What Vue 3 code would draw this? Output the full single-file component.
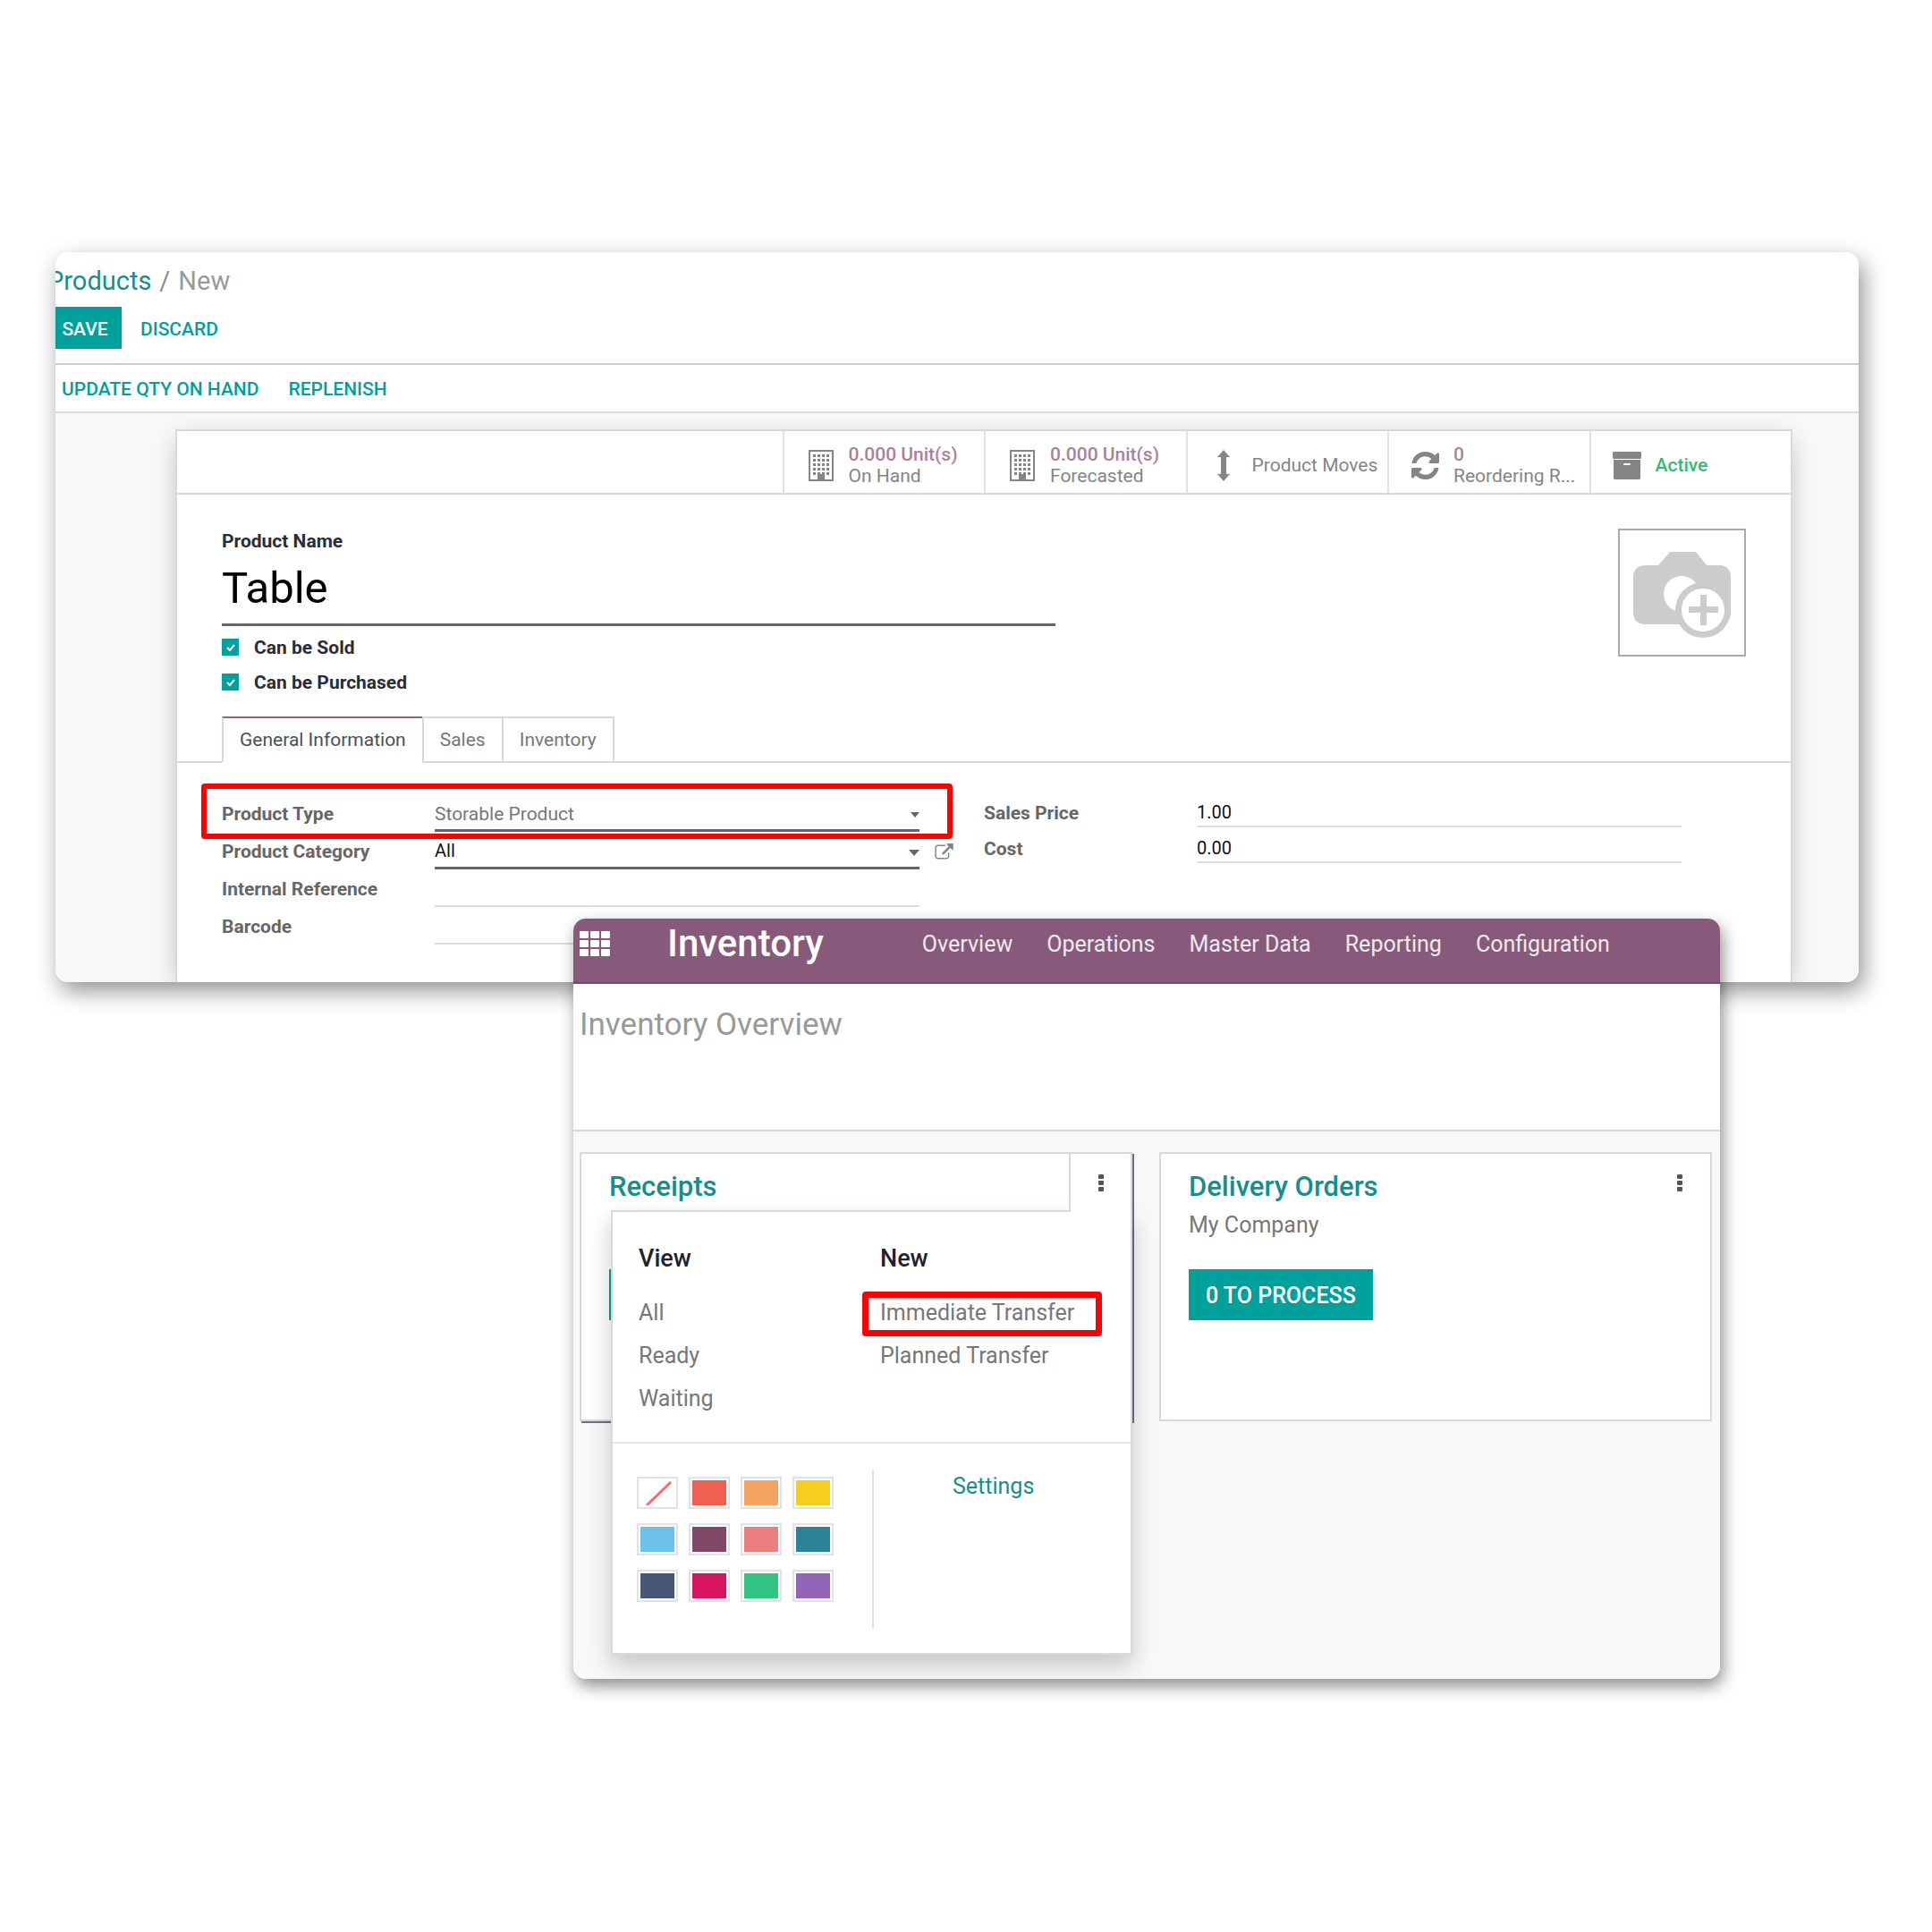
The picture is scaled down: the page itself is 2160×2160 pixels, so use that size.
<script setup>
import { ref } from 'vue'

const name = ref('Table')
const canBeSold = ref(true)
const canBePurchased = ref(true)
const productType = ref('Storable Product')
const category = ref('All')
const internalReference = ref('')
const barcode = ref('')
const salesPrice = ref('1.00')
const cost = ref('0.00')

const menuItems = ['Overview', 'Operations', 'Master Data', 'Reporting', 'Configuration']
const tabs = ['General Information', 'Sales', 'Inventory']
const activeTab = ref(tabs[0])
const viewLinks = ['All', 'Ready', 'Waiting']
const swatches = [
  '', '#f06050', '#f4a460', '#f7cd1f',
  '#6cc1ed', '#814968', '#eb7e7f', '#2c8397',
  '#475577', '#d6145f', '#30c381', '#9365b8',
]
const windowRows = [0, 1, 2, 3, 4]
const windowCols = [0, 1, 2, 3]
</script>

<template>
  <main class="page">
    <section class="panel product">
      <header class="product-head">
        <nav class="breadcrumb">
          <a href="#">Products</a><span class="slash">/</span><span class="current">New</span>
        </nav>
        <div class="head-buttons">
          <button class="btn primary save">SAVE</button>
          <button class="btn flat">DISCARD</button>
        </div>
      </header>
      <div class="actions">
        <button class="btn flat">UPDATE QTY ON HAND</button>
        <button class="btn flat">REPLENISH</button>
      </div>

      <div class="form-bg">
        <div class="sheet">
          <div class="stats">
            <button v-for="label in ['On Hand', 'Forecasted']" :key="label" class="stat">
              <svg class="stat-icon" viewBox="0 0 28 35" width="28" height="35" fill="#858585">
                <path fill-rule="evenodd" d="M0 0h28v35H0zM2 2v31h8v-6h8v6h8V2z" />
                <template v-for="r in windowRows" :key="r">
                  <rect v-for="c in windowCols" :key="c" :x="5 + c * 5" :y="5 + r * 5" width="3" height="3" />
                </template>
              </svg>
              <span class="stat-text"><b>0.000 Unit(s)</b><span>{{ label }}</span></span>
            </button>
            <button class="stat moves">
              <svg class="stat-icon" viewBox="0 0 14 35" width="14" height="35" fill="#858585">
                <path d="M7 0l7 8h-4v19h4l-7 8-7-8h4V8H0z" />
              </svg>
              <span class="stat-text">Product Moves</span>
            </button>
            <button class="stat">
              <svg class="stat-icon" viewBox="128 128 1536 1536" width="31" height="31" fill="#858585">
                <path d="M1639 1056q0 5-1 7-64 268-268 434.500t-478 166.500q-146 0-282.500-55t-243.500-157l-129 129q-19 19-45 19t-45-19-19-45v-448q0-26 19-45t45-19h448q26 0 45 19t19 45-19 45l-137 137q71 66 161 102t187 36q134 0 250-65t186-179q11-17 53-117 8-23 30-23h192q13 0 22.500 9.500t9.500 22.500zm25-800v448q0 26-19 45t-45 19h-448q-26 0-45-19t-19-45 19-45l138-138q-148-137-349-137-134 0-250 65t-186 179q-11 17-53 117-8 23-30 23h-199q-13 0-22.500-9.500t-9.500-22.500v-7q65-268 270-434.500t480-166.500q146 0 284 55.500t245 156.500l130-129q19-19 45-19t45 19 19 45z" />
              </svg>
              <span class="stat-text"><b>0</b><span>Reordering R...</span></span>
            </button>
            <button class="stat active">
              <svg class="stat-icon" viewBox="0 0 32 31" width="32" height="31" fill="#858585">
                <path d="M1 0h30l1 1v6l-1 1H1L0 7V1z" />
                <path fill-rule="evenodd" d="M1 9h30v21l-1 1H2l-1-1zM13 13q-1 0-1 1t1 1h6q1 0 1-1t-1-1z" />
              </svg>
              <span class="stat-text">Active</span>
            </button>
          </div>

          <div class="title-block">
            <div class="title-left">
              <label class="name-label" for="name">Product Name</label>
              <input id="name" v-model="name" class="name-input" type="text">
              <div class="options">
                <label class="check"><input v-model="canBeSold" type="checkbox">Can be Sold</label>
                <label class="check"><input v-model="canBePurchased" type="checkbox">Can be Purchased</label>
              </div>
            </div>
            <button class="photo" aria-label="Add image">
              <svg viewBox="0 0 110 106" width="110" height="106">
                <path fill="#ccc" d="M14 15h14L41 0h29l12 15h14q13 0 13 14v38q0 14-13 14H14Q0 81 0 67V29Q0 15 14 15z" />
                <circle cx="54" cy="47" r="20" fill="#fff" />
                <circle cx="78" cy="65" r="31" fill="#ccc" />
                <circle cx="78" cy="65" r="24" fill="#fff" />
                <path fill="#ccc" d="M75 48h7v13h13v7H82v14h-7V68H62v-7h13z" />
              </svg>
            </button>
          </div>

          <div class="tabs" role="tablist">
            <button
              v-for="tab in tabs" :key="tab" role="tab"
              :class="['tab', { selected: tab === activeTab }]" @click="activeTab = tab"
            >{{ tab }}</button>
          </div>

          <div class="fields">
            <div class="group left">
              <div class="field strong marked">
                <label for="type">Product Type</label>
                <div class="control">
                  <select id="type" v-model="productType"><option>Storable Product</option></select>
                  <svg class="caret" viewBox="0 0 10 6" width="10" height="6"><path fill="#666" d="M0 0h10L5 6z" /></svg>
                </div>
              </div>
              <div class="field strong">
                <label for="category">Product Category</label>
                <div class="control">
                  <input id="category" v-model="category" type="text">
                  <svg class="caret" viewBox="0 0 12 7" width="12" height="7"><path fill="#666" d="M0 0h12L6 7z" /></svg>
                </div>
                <button class="open" aria-label="Open category">
                  <svg viewBox="0 0 1792 1664" width="21" height="19"><path fill="#7c8590" d="M1408 928v320q0 119-84.500 203.500t-203.500 84.500h-832q-119 0-203.500-84.500t-84.500-203.500v-832q0-119 84.500-203.500t203.500-84.500h704q14 0 23 9t9 23v64q0 14-9 23t-23 9h-704q-66 0-113 47t-47 113v832q0 66 47 113t113 47h832q66 0 113-47t47-113v-320q0-14 9-23t23-9h64q14 0 23 9t9 23zm384-864v512q0 26-19 45t-45 19-45-19l-176-176-652 652q-10 10-23 10t-23-10l-114-114q-10-10-10-23t10-23l652-652-176-176q-19-19-19-45t19-45 45-19h512q26 0 45 19t19 45z" /></svg>
                </button>
              </div>
              <div class="field">
                <label for="reference">Internal Reference</label>
                <div class="control"><input id="reference" v-model="internalReference" type="text"></div>
              </div>
              <div class="field">
                <label for="barcode">Barcode</label>
                <div class="control"><input id="barcode" v-model="barcode" type="text"></div>
              </div>
            </div>
            <div class="group right">
              <div class="field">
                <label for="price">Sales Price</label>
                <div class="control"><input id="price" v-model="salesPrice" type="text"></div>
              </div>
              <div class="field">
                <label for="cost">Cost</label>
                <div class="control"><input id="cost" v-model="cost" type="text"></div>
              </div>
            </div>
          </div>
        </div>
      </div>
    </section>

    <section class="panel inventory">
      <nav class="navbar">
        <button class="apps" aria-label="Apps">
          <svg viewBox="0 0 35 28" width="35" height="28" fill="#fff">
            <template v-for="r in 3" :key="r">
              <rect v-for="c in 3" :key="c" :x="(c - 1) * 12" :y="(r - 1) * 10" width="10" height="8" rx="1" />
            </template>
          </svg>
        </button>
        <a class="brand" href="#">Inventory</a>
        <div class="menu">
          <a v-for="item in menuItems" :key="item" href="#">{{ item }}</a>
        </div>
      </nav>
      <header class="overview-head"><h1>Inventory Overview</h1></header>
      <div class="board">
        <article class="card open-card">
          <h2><a href="#">Receipts</a></h2>
          <button class="process" aria-label="Receipts to process"></button>
          <button class="toggle" aria-label="Receipts menu">
            <svg viewBox="0 0 6 20" width="6" height="20" fill="#555"><rect width="6" height="5" rx="1" /><rect y="7" width="6" height="5" rx="1" /><rect y="14" width="6" height="5" rx="1" /></svg>
          </button>
          <div class="dropdown">
            <div class="links">
              <div>
                <h3>View</h3>
                <ul><li v-for="link in viewLinks" :key="link"><a href="#">{{ link }}</a></li></ul>
              </div>
              <div>
                <h3>New</h3>
                <ul>
                  <li class="marked"><a href="#">Immediate Transfer</a></li>
                  <li><a href="#">Planned Transfer</a></li>
                </ul>
              </div>
            </div>
            <div class="settings-row">
              <div class="swatches">
                <button
                  v-for="color in swatches" :key="color" class="swatch"
                  :aria-label="color || 'No color'" :style="{ backgroundColor: color || '#fff' }"
                >
                  <svg v-if="!color" viewBox="0 0 38 28" width="38" height="28"><path d="M7 28L34 2" stroke="#f66" stroke-width="3" /></svg>
                </button>
              </div>
              <div class="settings"><a href="#">Settings</a></div>
            </div>
          </div>
        </article>
        <article class="card">
          <h2><a href="#">Delivery Orders</a></h2>
          <p>My Company</p>
          <button class="process">0 TO PROCESS</button>
          <button class="toggle" aria-label="Delivery Orders menu">
            <svg viewBox="0 0 6 20" width="6" height="20" fill="#555"><rect width="6" height="5" rx="1" /><rect y="7" width="6" height="5" rx="1" /><rect y="14" width="6" height="5" rx="1" /></svg>
          </button>
        </article>
      </div>
    </section>
  </main>
</template>

<style>
body { margin: 0; background: #fff; }
</style>

<style scoped>
* { box-sizing: border-box; }
.page {
  min-height: 100vh;
  padding: 282px 82px 0 62px;
  font: 400 20px/24px Roboto, "Liberation Sans", sans-serif;
  color: #666;
}
a { color: inherit; text-decoration: none; }
button, input, select {
  margin: 0; padding: 0; border: 0; border-radius: 0; outline: 0;
  background: none; font: inherit; color: inherit; appearance: none;
}
svg { display: block; }
h1, h2, h3, p, ul { margin: 0; padding: 0; list-style: none; }

.panel {
  border-radius: 14px;
  overflow: hidden;
  background: #fff;
  box-shadow: 5px 10px 26px rgba(0, 0, 0, .43);
}

/* product form */
.product-head { padding: 15px 0 16px; border-bottom: 2px solid #ccc; }
.breadcrumb { display: flex; margin-left: -9px; font-size: 29px; line-height: 34px; color: #999; }
.breadcrumb a { color: #168f8c; }
.breadcrumb .slash { margin: 0 9px; color: #868e96; }
.head-buttons { display: flex; gap: 21px; margin-top: 12px; }
.btn { height: 47px; padding-top: 2px; font-size: 21px; font-weight: 500; }
.flat { color: #00a09d; }
.save { width: 74px; padding-right: 8px; color: #fff; background: #00a09d; text-align: center; }
.actions { display: flex; align-items: center; gap: 33px; height: 54px; padding-left: 7px; border-bottom: 2px solid #d5dade; }
.form-bg { padding: 18px 74px 0 134px; background: #f8f8f8; }
.sheet { border: 2px solid #d5dade; border-bottom: 0; background: #fff; box-shadow: 0 8px 28px -6px rgba(0, 0, 0, .3); }

.stats { display: flex; justify-content: flex-end; height: 71px; border-bottom: 2px solid #d5dade; font-size: 21px; }
.stat {
  display: flex; align-items: center; gap: 17px; flex: 0 0 12.5%;
  padding: 7px 0 0 27px; border-left: 2px solid #dfe3e6;
  color: #858585; text-align: left; white-space: nowrap;
}
.stat:nth-child(4) { padding-left: 25px; gap: 16px; }
.stat-icon { flex: none; }
.stat-text { display: flex; flex-direction: column; }
.stat b { font-weight: 500; color: #a8819c; }
.stat.moves { gap: 25px; padding-left: 33px; }
.active .stat-text { color: #35b96f; font-weight: 500; }
.stat.active { padding-left: 24px; gap: 16px; }

.title-block { display: flex; justify-content: space-between; align-items: flex-start; padding: 38px 50px 0; }
.title-left { flex: 0 1 932px; font-size: 21px; color: #2c2c34; font-weight: 700; }
.name-label { display: block; line-height: 28px; }
.name-input { display: block; width: 100%; height: 81px; padding-bottom: 2px; border-bottom: 3px solid #666; font-size: 49px; font-weight: 400; color: #000; }
.options { padding-top: 4px; }
.check { display: flex; align-items: center; height: 39px; }
.check input {
  width: 19px; height: 19px; margin-right: 17px;
  background: #00a09d url("data:image/svg+xml,%3Csvg xmlns='http://www.w3.org/2000/svg' viewBox='0 0 19 19'%3E%3Cpath d='M6 10l3 3 5-6' fill='none' stroke='%23fff' stroke-width='2'/%3E%3C/svg%3E");
}
.photo { display: flex; justify-content: center; align-items: center; width: 143px; height: 143px; padding-top: 14px; border: 2px solid #aaa; }

.tabs { display: flex; margin-top: 19px; padding-left: 50px; border-bottom: 2px solid #d5dade; }
.tab { height: 52px; margin: 0 0 -2px -2px; padding: 0 18px; border: 2px solid #d5dade; font-size: 21px; color: #777; }
.tab.selected { margin-left: 0; border-top-color: #8d6482; border-bottom-color: #fff; color: #495057; }

.fields { display: grid; grid-template-columns: 1fr 1fr; padding: 33px 50px 42px; }
.left { padding-top: 2px; }
.field { position: relative; display: grid; grid-template-columns: 238px 1fr 72px; height: 42px; line-height: 40px; padding-top: 2px; }
.field label { font-size: 21px; font-weight: 700; }
.control { position: relative; display: flex; border-bottom: 2px solid #ddd; color: #111; }
.control input, .control select { width: 100%; height: 37px; }
.control select { font-size: 21px; color: #777; }
.strong .control { border-bottom: 3px solid #666; }
.caret { position: absolute; right: 0; top: 18px; }
.open { align-self: center; padding-left: 17px; }
.right { margin-top: -1px; }
.right .field { height: 40px; padding-top: 8px; line-height: 32px; }
.right .control input { height: 30px; }
.field.marked::after { content: ""; position: absolute; inset: -12px 35px -8px -23px; border: 6px solid #f00; border-radius: 4px; pointer-events: none; }

/* inventory overview */
.inventory { position: relative; margin: -71px 155px 0 579px; box-shadow: 3px 8px 18px rgba(0, 0, 0, .45); }
.navbar { display: flex; align-items: center; height: 73px; padding: 0 0 16px 7px; border-bottom: 2px solid #714b67; background: #875a7b; color: #fff; }
.brand { margin: 0 110px 0 63px; font-size: 42px; line-height: 48px; font-weight: 500; }
.menu { display: flex; gap: 38px; padding-top: 2px; font-size: 25px; line-height: 32px; color: #f0eaef; }
.overview-head { padding: 26px 7px 97px; border-bottom: 2px solid #d9d9d9; }
.overview-head h1 { font-size: 35px; line-height: 40px; font-weight: 400; color: #999; }
.board { display: grid; grid-template-columns: 1fr 1fr; gap: 30px; padding: 23px 9px 288px 7px; background: #f8f8f8; }
.card { position: relative; height: 301px; padding: 17px 31px 0; border: 2px solid #d5dade; background: #fff; font-size: 25px; }
.open-card { box-shadow: 2px 2px 0 #6b727d; }
.card h2 { font-size: 31px; line-height: 40px; font-weight: 500; color: #168f8c; }
.card p { margin-top: 7px; line-height: 32px; color: #777; }
.process { height: 57px; margin-top: 33px; padding: 2px 19px 0; background: #00a09d; color: #fff; font-weight: 500; }
.open-card .process { margin-top: 72px; }
.toggle { position: absolute; top: 0; right: 0; z-index: 2; display: flex; justify-content: center; width: 69px; height: 65px; padding-top: 23px; }
.open-card .toggle { border-left: 2px solid #d5dade; background: #fff; }
.dropdown { position: absolute; z-index: 1; top: 63px; left: 33px; right: -2px; border: 2px solid #d5dade; background: #fff; box-shadow: 0 12px 24px rgba(0, 0, 0, .2); }
.links { display: grid; grid-template-columns: 270px 1fr; padding: 34px 0 24px 29px; border-bottom: 2px solid #dfe3e6; }
.links h3 { margin-bottom: 19px; font-size: 27px; line-height: 36px; font-weight: 500; color: #22222a; }
.links li { position: relative; line-height: 48px; color: #777; }
.links .marked::after { content: ""; position: absolute; inset: 0 32px -2px -20px; border: 7px solid #f00; border-radius: 4px; pointer-events: none; }
.settings-row { display: flex; padding: 29px 0 27px 27px; }
.swatches { display: grid; grid-template-columns: repeat(4, 46px); grid-auto-rows: 36px; gap: 16px 12px; padding-top: 8px; }
.swatch { border: 2px solid #dfe3e6; padding: 2px; background-clip: content-box; }
.settings { flex: 1; height: 178px; margin-left: 43px; padding: 3px 0 0 88px; border-left: 2px solid #dfe3e6; line-height: 32px; color: #168f8c; }
</style>
